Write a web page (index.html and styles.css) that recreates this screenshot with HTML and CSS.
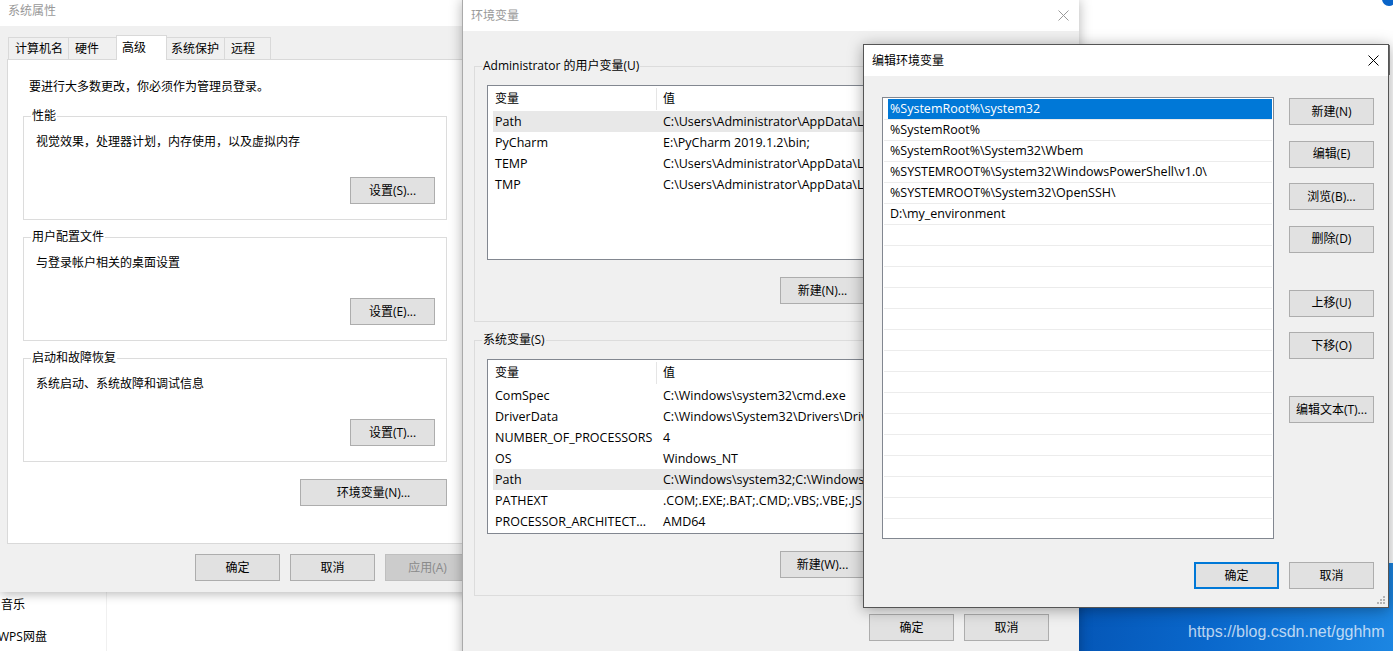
FILE: index.html
```html
<!DOCTYPE html>
<html lang="zh-CN">
<head>
<meta charset="utf-8">
<title>编辑环境变量</title>
<link rel="stylesheet" href="styles.css">
</head>
<body>
<div class="desktop">
  <nav class="explorer">
    <div class="nav-item">音乐</div>
    <div class="nav-item nav-wps">WPS网盘</div>
  </nav>

  <div class="bg-window">
    <div class="bg-combo"></div>
  </div>
  <div class="info-dot"></div>

  <div class="wallpaper">
    <span class="watermark">https://blog.csdn.net/gghhm</span>
  </div>

  <!-- 系统属性 -->
  <section class="win sysprop">
    <header class="titlebar sysprop-title">
      <span class="title inactive">系统属性</span>
    </header>
    <div class="sysprop-body">
      <div class="tabs">
        <div class="tab tab-name">计算机名</div>
        <div class="tab tab-hw">硬件</div>
        <div class="tab tab-adv active">高级</div>
        <div class="tab tab-prot">系统保护</div>
        <div class="tab tab-remote">远程</div>
      </div>
      <div class="tab-panel">
        <p class="notice">要进行大多数更改，你必须作为管理员登录。</p>
        <fieldset class="group">
          <legend>性能</legend>
          <p class="group-desc">视觉效果，处理器计划，内存使用，以及虚拟内存</p>
          <div class="btn-row"><button class="btn">设置(S)...</button></div>
        </fieldset>
        <fieldset class="group">
          <legend>用户配置文件</legend>
          <p class="group-desc">与登录帐户相关的桌面设置</p>
          <div class="btn-row"><button class="btn">设置(E)...</button></div>
        </fieldset>
        <fieldset class="group">
          <legend>启动和故障恢复</legend>
          <p class="group-desc">系统启动、系统故障和调试信息</p>
          <div class="btn-row"><button class="btn">设置(T)...</button></div>
        </fieldset>
        <div class="btn-row env-row"><button class="btn btn-wide">环境变量(N)...</button></div>
      </div>
      <div class="dialog-buttons sysprop-buttons">
        <button class="btn">确定</button>
        <button class="btn">取消</button>
        <button class="btn disabled">应用(A)</button>
      </div>
    </div>
  </section>

  <!-- 环境变量 -->
  <section class="win envwin">
    <header class="titlebar env-title">
      <span class="title inactive">环境变量</span>
      <svg class="close close-inactive" width="11" height="11" viewBox="0 0 11 11"><path d="M0.5 0.5 L10.5 10.5 M10.5 0.5 L0.5 10.5" stroke="currentColor" stroke-width="1" fill="none"/></svg>
    </header>
    <div class="env-body">
      <fieldset class="group env-group">
        <legend>Administrator 的用户变量(U)</legend>
        <div class="listview">
          <div class="lv-head">
            <div class="lv-c1">变量</div>
            <div class="lv-c2">值</div>
          </div>
          <div class="lv-row sel-inactive"><div class="lv-c1">Path</div><div class="lv-c2">C:\Users\Administrator\AppData\Lo</div></div>
          <div class="lv-row"><div class="lv-c1">PyCharm</div><div class="lv-c2">E:\PyCharm 2019.1.2\bin;</div></div>
          <div class="lv-row"><div class="lv-c1">TEMP</div><div class="lv-c2">C:\Users\Administrator\AppData\Lo</div></div>
          <div class="lv-row"><div class="lv-c1">TMP</div><div class="lv-c2">C:\Users\Administrator\AppData\Lo</div></div>
        </div>
        <div class="btn-row env-btns">
          <button class="btn">新建(N)...</button>
        </div>
      </fieldset>
      <fieldset class="group env-group env-group2">
        <legend>系统变量(S)</legend>
        <div class="listview">
          <div class="lv-head">
            <div class="lv-c1">变量</div>
            <div class="lv-c2">值</div>
          </div>
          <div class="lv-row"><div class="lv-c1">ComSpec</div><div class="lv-c2">C:\Windows\system32\cmd.exe</div></div>
          <div class="lv-row"><div class="lv-c1">DriverData</div><div class="lv-c2">C:\Windows\System32\Drivers\Driv</div></div>
          <div class="lv-row"><div class="lv-c1">NUMBER_OF_PROCESSORS</div><div class="lv-c2">4</div></div>
          <div class="lv-row"><div class="lv-c1">OS</div><div class="lv-c2">Windows_NT</div></div>
          <div class="lv-row sel-inactive"><div class="lv-c1">Path</div><div class="lv-c2">C:\Windows\system32;C:\Windows;</div></div>
          <div class="lv-row"><div class="lv-c1">PATHEXT</div><div class="lv-c2">.COM;.EXE;.BAT;.CMD;.VBS;.VBE;.JS</div></div>
          <div class="lv-row"><div class="lv-c1">PROCESSOR_ARCHITECT...</div><div class="lv-c2">AMD64</div></div>
        </div>
        <div class="btn-row env-btns">
          <button class="btn">新建(W)...</button>
        </div>
      </fieldset>
      <div class="dialog-buttons env-buttons">
        <button class="btn">确定</button>
        <button class="btn">取消</button>
      </div>
    </div>
  </section>

  <!-- 编辑环境变量 -->
  <section class="win editdlg">
    <header class="titlebar edit-title">
      <span class="title">编辑环境变量</span>
      <svg class="close" width="11" height="11" viewBox="0 0 11 11"><path d="M0.5 0.5 L10.5 10.5 M10.5 0.5 L0.5 10.5" stroke="currentColor" stroke-width="1" fill="none"/></svg>
    </header>
    <div class="edit-body">
      <div class="edit-main">
        <div class="pathlist">
          <div class="pl-row selected"><span class="pl-text">%SystemRoot%\system32</span></div>
          <div class="pl-row"><span class="pl-text">%SystemRoot%</span></div>
          <div class="pl-row"><span class="pl-text">%SystemRoot%\System32\Wbem</span></div>
          <div class="pl-row"><span class="pl-text">%SYSTEMROOT%\System32\WindowsPowerShell\v1.0\</span></div>
          <div class="pl-row"><span class="pl-text">%SYSTEMROOT%\System32\OpenSSH\</span></div>
          <div class="pl-row"><span class="pl-text">D:\my_environment</span></div>
          <div class="pl-row"></div>
          <div class="pl-row"></div>
          <div class="pl-row"></div>
          <div class="pl-row"></div>
          <div class="pl-row"></div>
          <div class="pl-row"></div>
          <div class="pl-row"></div>
          <div class="pl-row"></div>
          <div class="pl-row"></div>
          <div class="pl-row"></div>
          <div class="pl-row"></div>
          <div class="pl-row"></div>
          <div class="pl-row"></div>
          <div class="pl-row"></div>
          <div class="pl-row"></div>
          <div class="pl-row"></div>
        </div>
        <div class="side-buttons">
          <button class="btn">新建(N)</button>
          <button class="btn">编辑(E)</button>
          <button class="btn">浏览(B)...</button>
          <button class="btn">删除(D)</button>
          <button class="btn btn-gap">上移(U)</button>
          <button class="btn">下移(O)</button>
          <button class="btn btn-gap">编辑文本(T)...</button>
        </div>
      </div>
      <div class="dialog-buttons edit-buttons">
        <button class="btn btn-default">确定</button>
        <button class="btn">取消</button>
      </div>
    </div>
    <svg class="grip" width="10" height="10" viewBox="0 0 10 10">
      <rect x="7" y="1" width="2" height="2" fill="#b4b4b4"/>
      <rect x="4" y="4" width="2" height="2" fill="#b4b4b4"/>
      <rect x="7" y="4" width="2" height="2" fill="#b4b4b4"/>
      <rect x="1" y="7" width="2" height="2" fill="#b4b4b4"/>
      <rect x="4" y="7" width="2" height="2" fill="#b4b4b4"/>
      <rect x="7" y="7" width="2" height="2" fill="#b4b4b4"/>
    </svg>
  </section>
</div>
</body>
</html>
```

FILE: styles.css
```css
* { box-sizing: border-box; }
html, body { margin: 0; padding: 0; }
body {
  width: 1393px;
  height: 651px;
  overflow: hidden;
  background: #ffffff;
  font-family: "Open Sans", "Noto Sans CJK SC", sans-serif;
  font-size: 12px;
  line-height: 16px;
  color: #000;
}
p { margin: 0; }

.desktop {
  position: relative;
  width: 1393px;
  height: 651px;
  overflow: hidden;
}

/* ---------- background pieces ---------- */
.explorer {
  position: absolute;
  left: 0;
  top: 589px;
  width: 107px;
  height: 70px;
  border-right: 1px solid #f0f0f0;
  background: #fff;
}
.nav-item {
  height: 32px;
  line-height: 32px;
  padding-left: 1px;
  white-space: nowrap;
}
.nav-wps { margin-left: -3px; }

.bg-window {
  position: absolute;
  left: 1070px;
  top: 0;
  width: 323px;
  height: 563px;
  background: #fff;
  padding-top: 45px;
}
.bg-combo {
  height: 30px;
  margin-right: 3px;
  border: 1px solid #7a7a7a;
}
.info-dot {
  position: absolute;
  left: 1382px;
  top: -8px;
  width: 14px;
  height: 14px;
  border-radius: 50%;
  background: #0a64c8;
}

.wallpaper {
  position: absolute;
  left: 1070px;
  top: 563px;
  right: 0;
  bottom: 0;
  background: linear-gradient(100deg, #0454b4 0%, #0a68cc 45%, #1c86e2 100%);
}
.watermark {
  position: absolute;
  left: 118px;
  top: 60px;
  font-family: "Liberation Sans", Arial, sans-serif;
  font-size: 16px;
  line-height: 18px;
  color: rgba(255, 255, 255, 0.72);
  white-space: nowrap;
}

/* ---------- generic window ---------- */
.win {
  position: absolute;
  background: #f0f0f0;
  display: flex;
  flex-direction: column;
}
.titlebar {
  background: #fff;
  display: flex;
  align-items: center;
  justify-content: space-between;
  flex: none;
}
.title { white-space: nowrap; }
.title.inactive { color: #999; }
.close { display: block; color: #000; }
.close-inactive { color: #9a9a9a; }

.btn {
  font: inherit;
  line-height: 16px;
  width: 85px;
  height: 27px;
  padding: 0;
  margin: 0;
  background: #e1e1e1;
  border: 1px solid #adadad;
  color: #000;
  text-align: center;
  white-space: nowrap;
  flex: none;
}
.btn.disabled {
  background: #cccccc;
  border-color: #bfbfbf;
  color: #8a8a8a;
}
.btn-wide { width: 147px; }
.btn-default { border: 2px solid #0078d7; }

.btn-row {
  display: flex;
  justify-content: flex-end;
}
.dialog-buttons {
  display: flex;
  justify-content: flex-end;
  gap: 10px;
}

/* group boxes */
.group {
  margin: 0;
  padding: 0 11px 15px 0;
  border: 1px solid #dcdcdc;
  min-width: 0;
}
.group legend {
  margin-left: 7px;
  padding: 0 1px;
  line-height: 16px;
}

/* ---------- 系统属性 ---------- */
.sysprop {
  left: 0;
  top: 0;
  width: 477px;
  height: 592px;
  box-shadow: 0 2px 10px rgba(0, 0, 0, 0.28);
  z-index: 1;
}
.sysprop-title {
  height: 26px;
  align-items: flex-start;
  padding: 3px 0 0 8px;
}
.sysprop-body {
  padding: 9px 7px 0 7px;
}
.tabs {
  display: flex;
  align-items: flex-end;
  height: 25px;
  margin-bottom: -1px;
  padding-left: 1px;
  position: relative;
  z-index: 1;
}
.tab {
  height: 22px;
  margin-bottom: 1px;
  margin-left: -1px;
  border: 1px solid #d9d9d9;
  border-bottom: none;
  background: #f0f0f0;
  padding: 3px 0 0 5px;
  white-space: nowrap;
}
.tab:first-child { margin-left: 0; }
.tab.active {
  height: 25px;
  margin-bottom: 0;
  background: #fff;
  padding-top: 4px;
  position: relative;
  z-index: 1;
}
.tab-name { width: 61px; padding-left: 6px; }
.tab-hw { width: 49px; padding-left: 6px; }
.tab-adv { width: 51px; }
.tab-prot { width: 59px; padding-left: 4px; }
.tab-remote { width: 47px; padding-left: 6px; }

.tab-panel {
  background: #fff;
  border: 1px solid #d9d9d9;
  height: 485px;
  padding: 0 22px 0 15px;
}
.notice {
  margin: 19px 0 13px 6px;
}
.tab-panel .group + .group { margin-top: 9px; }
.group-desc {
  margin: 10px 0 0 12px;
}
.group .btn-row { margin-top: 27px; }
.tab-panel .env-row { margin-top: 17px; }
.sysprop-buttons { margin-top: 10px; }

/* ---------- 环境变量 ---------- */
.envwin {
  left: 462px;
  top: 0;
  width: 617px;
  height: 670px;
  border-left: 1px solid #aaaaaa;
  box-shadow: 0 0 12px rgba(0, 0, 0, 0.3);
  z-index: 2;
}
.env-title {
  height: 31px;
  padding: 0 10px 0 8px;
}
.env-body {
  padding: 27px 11px 0 11px;
}
.env-group { padding-left: 12px; padding-right: 12px; padding-bottom: 17px; }
.env-group legend { margin-left: -5px; }
.env-group2 { margin-top: 10px; }
.listview {
  margin-top: 11px;
  height: 175px;
  background: #fff;
  border: 1px solid #828790;
  padding: 1px 4px 0 5px;
  overflow: hidden;
}
.lv-head, .lv-row {
  display: flex;
  white-space: nowrap;
}
.lv-head { height: 24px; align-items: center; }
.lv-row { height: 21px; align-items: center; font-size: 12.5px; }
.lv-c1 {
  width: 164px;
  flex: none;
  padding-left: 2px;
  overflow: hidden;
}
.lv-head .lv-c1 {
  align-self: stretch;
  display: flex;
  align-items: center;
  border-right: 1px solid #e5e5e5;
  margin: 1px 0 1px 0;
}
.lv-c2 {
  width: 208px;
  flex: none;
  padding-left: 6px;
  overflow: hidden;
}
.sel-inactive { background: #e8e8e8; }
.env-group .env-btns { margin-top: 17px; padding-right: 190px; }
.env-buttons { margin-top: 18px; padding-right: 19px; }

/* ---------- 编辑环境变量 ---------- */
.editdlg {
  left: 863px;
  top: 44px;
  width: 526px;
  height: 564px;
  border: 1px solid #555;
  box-shadow: 0 2px 14px rgba(0, 0, 0, 0.35);
  z-index: 3;
}
.edit-title {
  height: 31px;
  padding: 0 9px 0 8px;
}
.edit-body {
  padding: 21px 14px 0 18px;
}
.edit-main {
  display: flex;
  gap: 15px;
}
.pathlist {
  width: 392px;
  height: 442px;
  flex: none;
  background: #fff;
  border: 1px solid #828790;
  padding: 1px 1px 1px 1px;
  overflow: hidden;
}
.pl-row {
  height: 21px;
  border-bottom: 1px solid #ececec;
  padding-left: 4px;
  display: flex;
}
.pl-text {
  flex: 1;
  padding-left: 2px;
  line-height: 20px;
  font-size: 12.5px;
  white-space: nowrap;
}
.pl-row.selected .pl-text {
  background: #0078d7;
  color: #fff;
}
.side-buttons {
  display: flex;
  flex-direction: column;
  gap: 15.5px;
  padding-top: 1px;
}
.side-buttons .btn-gap { margin-top: 21.5px; }
.edit-buttons { margin-top: 23px; }
.grip {
  position: absolute;
  right: 2px;
  bottom: 2px;
}
```
